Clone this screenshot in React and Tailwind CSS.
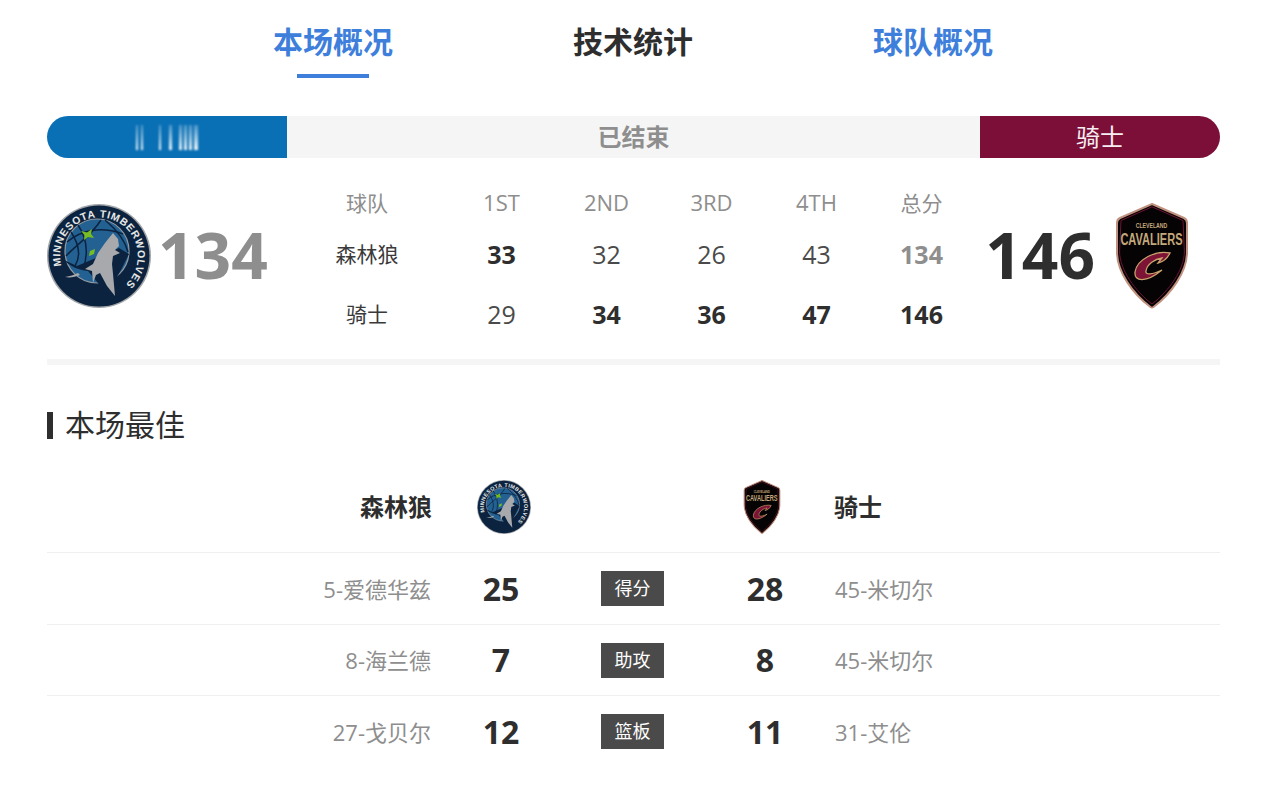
const font = { fontFamily: '"Open Sans", "Noto Sans CJK SC", sans-serif' };

function WolvesLogo({ className, id }) {
    return (
        <svg viewBox="0 0 104 104" className={className}>
            <circle cx="52" cy="52" r="52" fill="#a2a6a8" />
            <circle cx="52" cy="52" r="50.5" fill="#0c2340" />
            <circle cx="50" cy="47" r="32" fill="#236192" stroke="#8f9aa3" strokeWidth="1.2" />
            {/* ball seams */}
            <g fill="none" stroke="#0c2340" strokeWidth="1.5">
                <path d="M20 38 C34 26 54 22 76 30" />
                <path d="M19 52 C30 40 44 32 54 16" />
                <path d="M31 21 C40 34 42 48 36 66" />
                <path d="M58 16 C70 26 78 36 81 48" />
                <path d="M24 28 C32 40 34 52 28 62" />
            </g>
            <path d="M17 56 C22 62 32 66 41 67 L60 90 L74 66 L82 50 L72 44 L44 56 L30 62 Z" fill="#0c2340" />
            <path d="M34 27 L40 28.5 L45 25 L44 30 L47 34 L41 33 L37 36 L37.5 31 Z" fill="#78be20" />
            <path d="M43 47 L48 45 L47 50 L42 52 Z" fill="#78be20" />
            <path d="M18 73 C23 72 27 71 31 69 L33 71 C28 73 23 74 18 73 Z" fill="#a7a9ac" />
            <path
                d="M66 29 L71 35 L72 42 L68 46 L73 49 L66 52 L65 60 L66 70 L68 92 L60 82 L53 69 L49 71 L46 79 L45 67 L38 65 L46 60 L51 49 L58 39 Z"
                fill="#a7a9ac"
            />
            <defs>
                <path id={id} d="M14.5 62 A38.8 38.8 0 1 1 79 80" />
            </defs>
            <text fontSize="10.4" fontWeight="700" fill="#e6e8e6" letterSpacing="0.7" style={{ fontFamily: '"Liberation Sans", sans-serif' }}>
                <textPath href={`#${id}`}>MINNESOTA TIMBERWOLVES</textPath>
            </text>
        </svg>
    );
}

function CavsLogo({ className }) {
    const shield = "M36 0 L68 14 Q71 15.5 71 19 L71 48 C71 68 55 90 37.5 103 Q36 104 34.5 103 C17 90 1 68 1 48 L1 19 Q1 15.5 4 14 Z";
    return (
        <svg viewBox="-1 -1 74 106" className={className}>
            <path d={shield} fill="#050303" stroke="#c0917f" strokeWidth="2" />
            <path d="M36 2.8 L67 16.5 L68.4 48 C68 66 53 87 36 100 C19 87 4 66 3.6 48 L5 16.5 Z" fill="none" stroke="#6f1533" strokeWidth="1" />
            <g transform="scale(0.65 1)" style={{ fontFamily: '"Liberation Sans", sans-serif' }} fontWeight="700" fill="#c4a87c" textAnchor="middle">
                <text x="54.6" y="24" fontSize="8">CLEVELAND</text>
                <text x="54.6" y="41" fontSize="17">CAVALIERS</text>
            </g>
            <path
                d="M54 49 C40 46 21 55 19 68 C18 78 30 79 46 66 C36 71 29 71 30 67 C31 60 39 55 46 54 L42 59 C47 58 51 55 54 49 Z"
                fill="#7d1335"
                stroke="#c9a26c"
                strokeWidth="1.3"
            />
        </svg>
    );
}

function TopTab({ children, active, color }) {
    return (
        <div className="relative flex h-[78px] w-[300px] items-start justify-center pt-[20px]">
            <span className={`text-[30px] leading-[44px] font-bold ${color}`}>{children}</span>
            {active && <div className="absolute bottom-0 left-1/2 h-[4px] w-[72px] -translate-x-1/2 bg-[#3f7fdc]" />}
        </div>
    );
}

function ScoreRow({ cells, className }) {
    return (
        <div className={`grid grid-cols-[134px_repeat(5,105px)] items-center text-center ${className}`}>
            {cells.map((c, i) => (
                <div key={i} className={c.cls}>{c.text}</div>
            ))}
        </div>
    );
}

const smudges = [
    "ml-[3px] w-[2px]",
    "ml-[3px] w-[2px]",
    "ml-[16px] w-[2px]",
    "ml-[8px] w-[3px]",
    "ml-[7px] w-[3px]",
    "ml-[2px] w-[3px]",
    "ml-[2px] w-[3px]",
    "ml-[2px] w-[4px]",
];

const headCjk = "text-[21px] text-[#8e8e8e]";
const headLatin = "pb-[3px] text-[22px] text-[#8e8e8e]";
const bold = "text-[25px] font-bold text-[#2e2e2e]";
const thin = "text-[25px] text-[#4a4a4a]";
const name = "pr-[30px] text-[21px] text-[#3a3a3a]";

const leaders = [
    { left: "5-爱德华兹", a: 25, label: "得分", b: 28, right: "45-米切尔", h: "h-[72px]" },
    { left: "8-海兰德", a: 7, label: "助攻", b: 8, right: "45-米切尔", h: "h-[71px]" },
    { left: "27-戈贝尔", a: 12, label: "篮板", b: 11, right: "31-艾伦", h: "h-[71px]" },
];

export default function App() {
    return (
        <div className="h-[785px] overflow-hidden bg-white pr-[53px] pl-[47px]" style={font}>
            {/* Tabs */}
            <div className="-ml-[1px] flex justify-center">
                <TopTab active color="text-[#3f7fdc]">本场概况</TopTab>
                <TopTab color="text-[#2e2e2e]">技术统计</TopTab>
                <TopTab color="text-[#3f7fdc]">球队概况</TopTab>
            </div>

            {/* Status bar */}
            <div className="mt-[38px] flex h-[42px] items-stretch">
                <div className="flex w-[240px] items-center justify-center rounded-l-full bg-[#0a70b5]">
                    <div className="flex h-[25px] w-[69px] items-stretch blur-[1px]">
                        {smudges.map((s, i) => (
                            <div key={i} className={`${s} bg-gradient-to-b from-white/25 via-white/60 to-white/95`} />
                        ))}
                    </div>
                </div>
                <div className="flex flex-1 items-center justify-center bg-[#f5f5f5] text-[24px] font-bold text-[#8e8e8e]">已结束</div>
                <div className="flex w-[240px] items-center justify-center rounded-r-full bg-[#7b0f37] text-[24px] text-[#f6eef1]">骑士</div>
            </div>

            {/* Score */}
            <div className="flex h-[201px] items-start">
                <div className="mt-[45px] flex w-[268px] items-center">
                    <WolvesLogo id="wolvesRingLarge" className="h-[104px] w-[104px] shrink-0" />
                    <span className="ml-[7px] pb-[2px] text-[64px] leading-[104px] font-bold text-[#8e8e8e]">134</span>
                </div>
                <div className="w-[659px] pt-[25px]">
                    <ScoreRow
                        className="h-[42px]"
                        cells={[
                            { text: "球队", cls: `pr-[30px] ${headCjk}` },
                            { text: "1ST", cls: headLatin },
                            { text: "2ND", cls: headLatin },
                            { text: "3RD", cls: headLatin },
                            { text: "4TH", cls: headLatin },
                            { text: "总分", cls: headCjk },
                        ]}
                    />
                    <ScoreRow
                        className="mt-[5px] h-[50px]"
                        cells={[
                            { text: "森林狼", cls: name },
                            { text: "33", cls: bold },
                            { text: "32", cls: thin },
                            { text: "26", cls: thin },
                            { text: "43", cls: thin },
                            { text: "134", cls: "text-[25px] font-bold text-[#8e8e8e]" },
                        ]}
                    />
                    <ScoreRow
                        className="mt-[10px] h-[50px]"
                        cells={[
                            { text: "骑士", cls: name },
                            { text: "29", cls: thin },
                            { text: "34", cls: bold },
                            { text: "36", cls: bold },
                            { text: "47", cls: bold },
                            { text: "146", cls: bold },
                        ]}
                    />
                </div>
                <div className="mt-[45px] flex flex-1 items-center justify-end">
                    <span className="mr-[20px] pb-[2px] text-[64px] leading-[104px] font-bold text-[#2e2e2e]">146</span>
                    <CavsLogo className="mr-[31px] h-[106px] w-[74px] shrink-0" />
                </div>
            </div>
            <div className="h-[6px] bg-[#f5f5f5]" />

            {/* Best of game */}
            <div className="mt-[45px] flex h-[30px] items-center">
                <div className="h-[27px] w-[6px] bg-[#2e2e2e]" />
                <h2 className="ml-[12px] text-[30px] leading-[30px] font-normal text-[#2e2e2e]">本场最佳</h2>
            </div>

            <div className="mt-[26px] grid h-[87px] grid-cols-[385px_138px_126px_138px_1fr] items-center border-b border-[#efefef] pb-[4px]">
                <div className="text-right text-[24px] font-bold text-[#2e2e2e]">森林狼</div>
                <WolvesLogo id="wolvesRingSmall" className="ml-[45px] h-[54px] w-[54px]" />
                <div />
                <CavsLogo className="ml-[47px] h-[54px] w-[38px]" />
                <div className="text-[24px] font-bold text-[#2e2e2e]">骑士</div>
            </div>

            {leaders.map((row) => (
                <div key={row.label} className={`grid grid-cols-[385px_138px_126px_138px_1fr] items-center ${row.h} ${row.label === "篮板" ? "" : "border-b border-[#efefef]"}`}>
                    <div className="pt-[1px] pr-[1px] text-right text-[22px] text-[#8e8e8e]">{row.left}</div>
                    <div className="text-center text-[32px] font-bold text-[#2e2e2e]">{row.a}</div>
                    <div className="flex justify-center pr-[1px]">
                        <span className="flex h-[35px] w-[63px] items-center justify-center bg-[#4a4a4a] text-[18px] text-white">{row.label}</span>
                    </div>
                    <div className="text-center text-[32px] font-bold text-[#2e2e2e]">{row.b}</div>
                    <div className="pt-[1px] pl-[1px] text-[22px] text-[#8e8e8e]">{row.right}</div>
                </div>
            ))}
        </div>
    );
}
